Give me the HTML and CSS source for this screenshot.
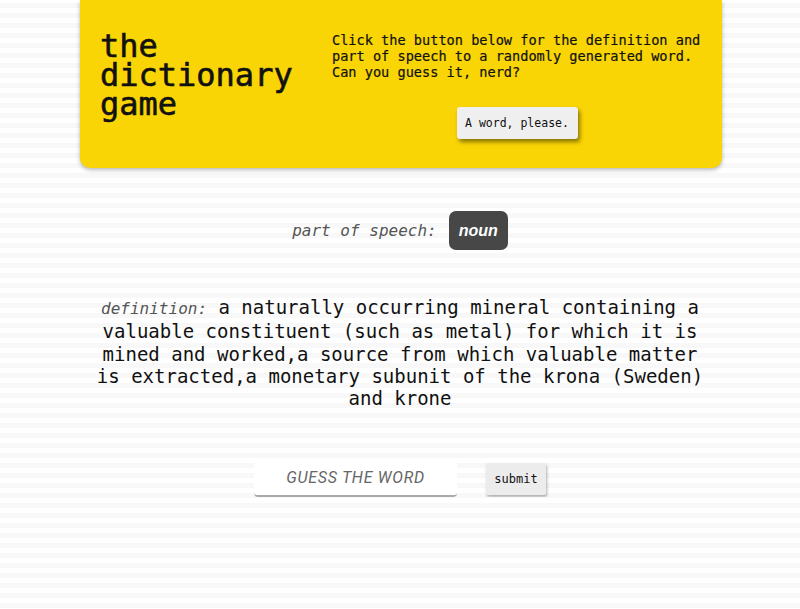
FILE: index.html
```html
<!DOCTYPE html>
<html lang="en">
<head>
<meta charset="utf-8">
<title>the dictionary game</title>
<link rel="stylesheet" href="styles.css">
</head>
<body>
<header class="card">
  <h1 class="title">the<br>dictionary<br>game</h1>
  <div class="intro">
    <p class="intro-text">Click the button below for the definition and part of speech to a randomly generated word. Can you guess it, nerd?</p>
    <button class="word-btn" type="button">A word, please.</button>
  </div>
</header>
<main>
  <div class="pos-row">
    <span class="label">part of speech:</span>
    <span class="badge">noun</span>
  </div>
  <p class="definition"><span class="label">definition:</span> a naturally occurring mineral containing a valuable constituent (such as metal) for which it is mined and worked,a source from which valuable matter is extracted,a monetary subunit of the krona (Sweden) and krone</p>
  <form class="guess-row">
    <input class="guess-input" type="text" placeholder="GUESS THE WORD">
    <button class="submit-btn" type="button">submit</button>
  </form>
</main>
</body>
</html>
```
FILE: styles.css
```css
html {
  background: repeating-linear-gradient(to bottom, #ffffff 0 3px, #f8f8f8 3px 8px, #ffffff 8px 10px);
  min-height: 100%;
}
body {
  margin: 0;
  font-family: "DejaVu Sans Mono", "Liberation Mono", monospace;
  color: #111;
}
.card {
  width: 642px;
  margin: 0 0 0 80px;
  box-sizing: border-box;
  padding: 32px 20px 29px 20px;
  background: #f9d505;
  border-radius: 0 0 10px 10px;
  box-shadow: 0 2px 4px rgba(0, 0, 0, 0.28);
  display: flex;
}
.title {
  width: 232px;
  flex: none;
  margin: 0;
  font-size: 32px;
  line-height: 29px;
  font-weight: normal;
  color: #111;
  -webkit-text-stroke: 0.6px #111;
}
.intro {
  flex: 1;
  display: flex;
  flex-direction: column;
  align-items: center;
}
.intro-text {
  margin: 0;
  font-size: 13.6px;
  line-height: 16px;
  align-self: stretch;
  -webkit-text-stroke: 0.2px #111;
}
.word-btn {
  margin-top: 27px;
  width: 121px;
  height: 32px;
  padding: 0;
  border: none;
  border-radius: 3px;
  background: #efefef;
  box-shadow: 2px 3px 4px rgba(0, 0, 0, 0.45);
  font-family: "DejaVu Sans Mono", "Liberation Mono", monospace;
  font-size: 11.5px;
  color: #111;
}
.pos-row {
  margin-top: 43px;
  display: flex;
  justify-content: center;
  align-items: center;
  gap: 12px;
}
.label {
  font-style: italic;
  font-size: 16px;
  color: #555;
}
.badge {
  background: #474747;
  color: #fff;
  font-family: "Liberation Sans", Arial, sans-serif;
  font-weight: bold;
  font-style: italic;
  font-size: 16px;
  line-height: 19px;
  padding: 10px 10px;
  border-radius: 7px;
}
.definition {
  width: 627px;
  margin: 46px auto 0;
  text-align: center;
  font-size: 19px;
  line-height: 22.35px;
}
.guess-row {
  margin: 51px 0 0;
  display: flex;
  justify-content: center;
  align-items: center;
  gap: 29px;
}
.guess-input {
  width: 203px;
  height: 36px;
  box-sizing: border-box;
  border: none;
  border-bottom: 2px solid #a9a9a9;
  border-radius: 4px;
  background: #fff;
  font-family: Roboto, "Noto Sans", sans-serif;
  font-style: italic;
  font-size: 16px;
  letter-spacing: 0.7px;
  text-align: center;
  padding: 0;
}
.guess-input::placeholder {
  color: #666;
}
.submit-btn {
  width: 60px;
  height: 32px;
  padding: 0;
  border: none;
  border-radius: 2px;
  background: #ececec;
  box-shadow: 1px 2px 3px rgba(0, 0, 0, 0.3);
  font-family: "DejaVu Sans Mono", "Liberation Mono", monospace;
  font-size: 12px;
  color: #111;
}
```
